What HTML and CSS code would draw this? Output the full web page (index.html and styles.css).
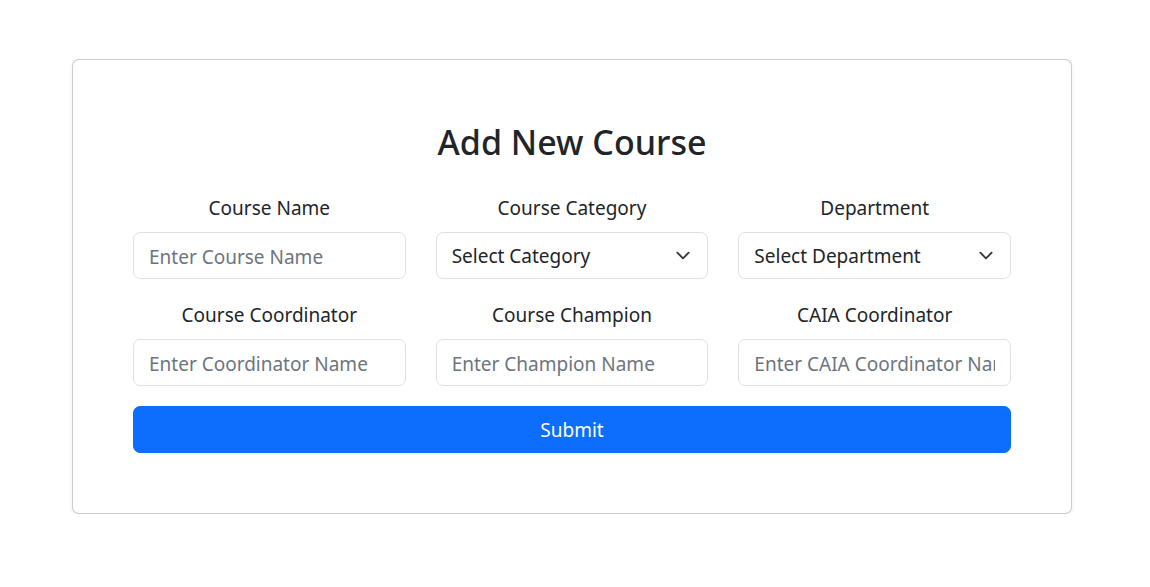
FILE: index.html
```html
<!DOCTYPE html>
<html lang="en">
<head>
<meta charset="utf-8">
<title>Add New Course</title>
<link rel="stylesheet" href="styles.css">
</head>
<body>
<div class="page">
  <div class="card">
    <h2 class="title">Add New Course</h2>
    <form class="form">
      <div class="grid">
        <div class="field">
          <label class="label" for="cname">Course Name</label>
          <input class="control" id="cname" type="text" placeholder="Enter Course Name">
        </div>
        <div class="field">
          <label class="label" for="ccat">Course Category</label>
          <div class="select-wrap">
            <select class="control select" id="ccat">
              <option>Select Category</option>
            </select>
            <svg class="chev" width="20" height="15" viewBox="0 0 16 16"><path d="m2 5 6 6 6-6" fill="none" stroke="#343a40" stroke-width="2" stroke-linecap="round" stroke-linejoin="round"/></svg>
          </div>
        </div>
        <div class="field">
          <label class="label" for="dept">Department</label>
          <div class="select-wrap">
            <select class="control select" id="dept">
              <option>Select Department</option>
            </select>
            <svg class="chev" width="20" height="15" viewBox="0 0 16 16"><path d="m2 5 6 6 6-6" fill="none" stroke="#343a40" stroke-width="2" stroke-linecap="round" stroke-linejoin="round"/></svg>
          </div>
        </div>
        <div class="field">
          <label class="label" for="coord">Course Coordinator</label>
          <input class="control" id="coord" type="text" placeholder="Enter Coordinator Name">
        </div>
        <div class="field">
          <label class="label" for="champ">Course Champion</label>
          <input class="control" id="champ" type="text" placeholder="Enter Champion Name">
        </div>
        <div class="field">
          <label class="label" for="caia">CAIA Coordinator</label>
          <input class="control" id="caia" type="text" placeholder="Enter CAIA Coordinator Name">
        </div>
      </div>
      <button class="submit" type="button">Submit</button>
    </form>
  </div>
</div>
</body>
</html>
```
FILE: styles.css
```css
* { box-sizing: border-box; }
html, body { margin: 0; padding: 0; background: #fff; }
body {
  font-family: "Segoe UI", "Noto Sans", "Open Sans", sans-serif;
  font-size: 19px;
  line-height: 1.5;
  color: #212529;
}
.page {
  padding: 59px 0 0 72px;
}
.card {
  width: 1000px;
  border: 1px solid rgba(0,0,0,0.2);
  border-radius: 7px;
  box-shadow: 0 2px 4px rgba(0,0,0,0.075);
  padding: 60px;
  background: #fff;
}
.title {
  margin: 0 0 28px;
  text-align: center;
  font-size: 34px;
  font-weight: 500;
  line-height: 44px;
}
.grid {
  display: grid;
  grid-template-columns: repeat(3, 1fr);
  column-gap: 30px;
  row-gap: 20px;
}
.field {
  display: flex;
  flex-direction: column;
}
.label {
  text-align: center;
  height: 30px;
  padding-top: 2px;
  line-height: 28px;
  margin-bottom: 10px;
}
.control {
  display: block;
  width: 100%;
  height: 47px;
  padding: 8px 15px 6px;
  font: inherit;
  color: #212529;
  background: #fff;
  border: 1px solid #dee2e6;
  border-radius: 7px;
  outline: none;
}
.control::placeholder { color: #6c757d; opacity: 1; }
.select-wrap { position: relative; }
.select {
  appearance: none;
  -webkit-appearance: none;
  padding-right: 50px;
}
.chev {
  position: absolute;
  right: 15px;
  top: 16px;
  pointer-events: none;
}
.submit {
  display: block;
  width: 100%;
  margin-top: 20px;
  height: 47px;
  padding: 2px 0 0;
  font: inherit;
  color: #fff;
  background: #0d6efd;
  border: 1px solid #0d6efd;
  border-radius: 7px;
}
```
